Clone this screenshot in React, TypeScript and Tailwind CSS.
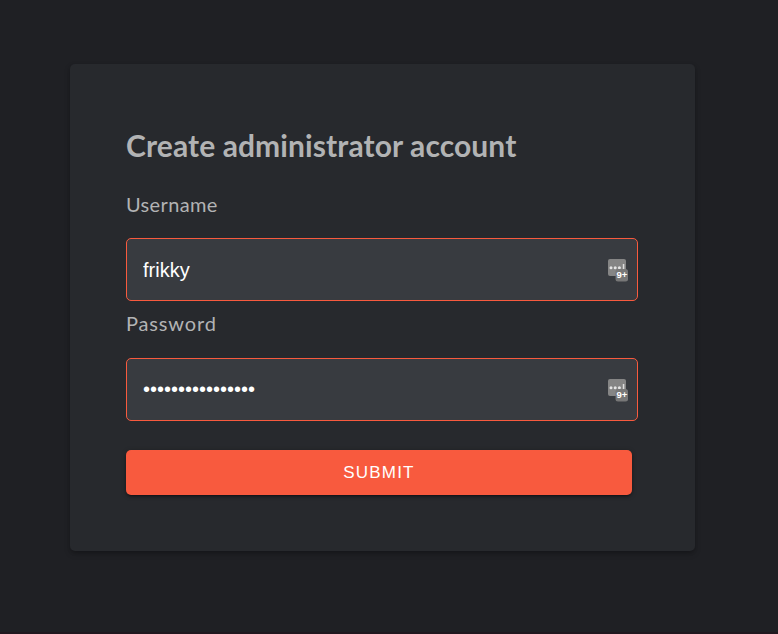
const fieldClass =
  'block h-[63px] w-[512px] rounded-[5px] border border-[#f85a3e] bg-[#383b40] pl-4 pr-12 font-["Liberation_Sans",Arial,sans-serif] text-[20px] text-white outline-none';

function ManagerIcon() {
  return (
    <svg
      className="absolute right-[8px] top-[20px]"
      width="22"
      height="24"
      viewBox="0 0 22 24"
      aria-hidden="true"
    >
      <rect x="0" y="1" width="18" height="17" rx="2" fill="#858585" />
      <circle cx="3" cy="9.7" r="1.5" fill="#e4e4e4" />
      <circle cx="7.2" cy="9.7" r="1.5" fill="#e4e4e4" />
      <circle cx="11.4" cy="9.7" r="1.5" fill="#e4e4e4" />
      <rect x="14.8" y="6" width="1.5" height="5" fill="#dedede" />
      <rect x="7.5" y="11" width="12.5" height="12.5" rx="2.5" fill="#777" />
      <text
        x="8.4"
        y="20.4"
        fill="#fff"
        fontSize="9.5"
        fontWeight="700"
        fontFamily="Liberation Sans, Arial, sans-serif"
      >
        9+
      </text>
    </svg>
  );
}

type FieldProps = {
  id: string;
  label: string;
  type: string;
  value: string;
  labelClass: string;
  inputClass: string;
};

function Field({ id, label, type, value, labelClass, inputClass }: FieldProps) {
  return (
    <div>
      <label htmlFor={id} className={`block h-[30px] text-[20px] ${labelClass}`}>
        {label}
      </label>
      <div className="relative mt-[18px] w-[512px]">
        <input id={id} type={type} defaultValue={value} className={`${fieldClass} ${inputClass}`} />
        <ManagerIcon />
      </div>
    </div>
  );
}

export default function App() {
  return (
    <main className='h-[634px] w-full overflow-hidden border-b-2 border-[#21181f] bg-[#1f2024] pl-[70px] pt-16 font-["Lato","Open_Sans",sans-serif] text-[#b2b3b4]'>
      <form
        className="h-[487px] w-[625px] rounded-[5px] bg-[#27292d] px-14 pt-[60px] shadow-[0_2px_4px_-1px_rgba(0,0,0,0.2),0_3px_6px_rgba(0,0,0,0.18)]"
        onSubmit={(event) => event.preventDefault()}
      >
        <h2 className="h-[44px] whitespace-nowrap text-[30px] font-bold leading-[42px] tracking-[0.1px]">
          Create administrator account
        </h2>
        <div className="mt-[22px] flex flex-col gap-[9px]">
          <Field
            id="username"
            label="Username"
            type="text"
            value="frikky"
            labelClass="leading-[28px] tracking-[0.35px]"
            inputClass="pt-px"
          />
          <Field
            id="password"
            label="Password"
            type="password"
            value="abcdefghijklmnop"
            labelClass="leading-[26px] tracking-[0.85px]"
            inputClass="pt-0"
          />
        </div>
        <button
          type="submit"
          className='mt-[29px] block h-[45px] w-[506px] rounded-[5px] bg-[#f85a3e] font-["Liberation_Sans",Arial,sans-serif] text-[17px] tracking-[1.2px] text-white shadow-[0_3px_1px_-2px_rgba(0,0,0,0.2),0_2px_2px_rgba(0,0,0,0.14),0_1px_5px_rgba(0,0,0,0.3)]'
        >
          SUBMIT
        </button>
      </form>
    </main>
  );
}
